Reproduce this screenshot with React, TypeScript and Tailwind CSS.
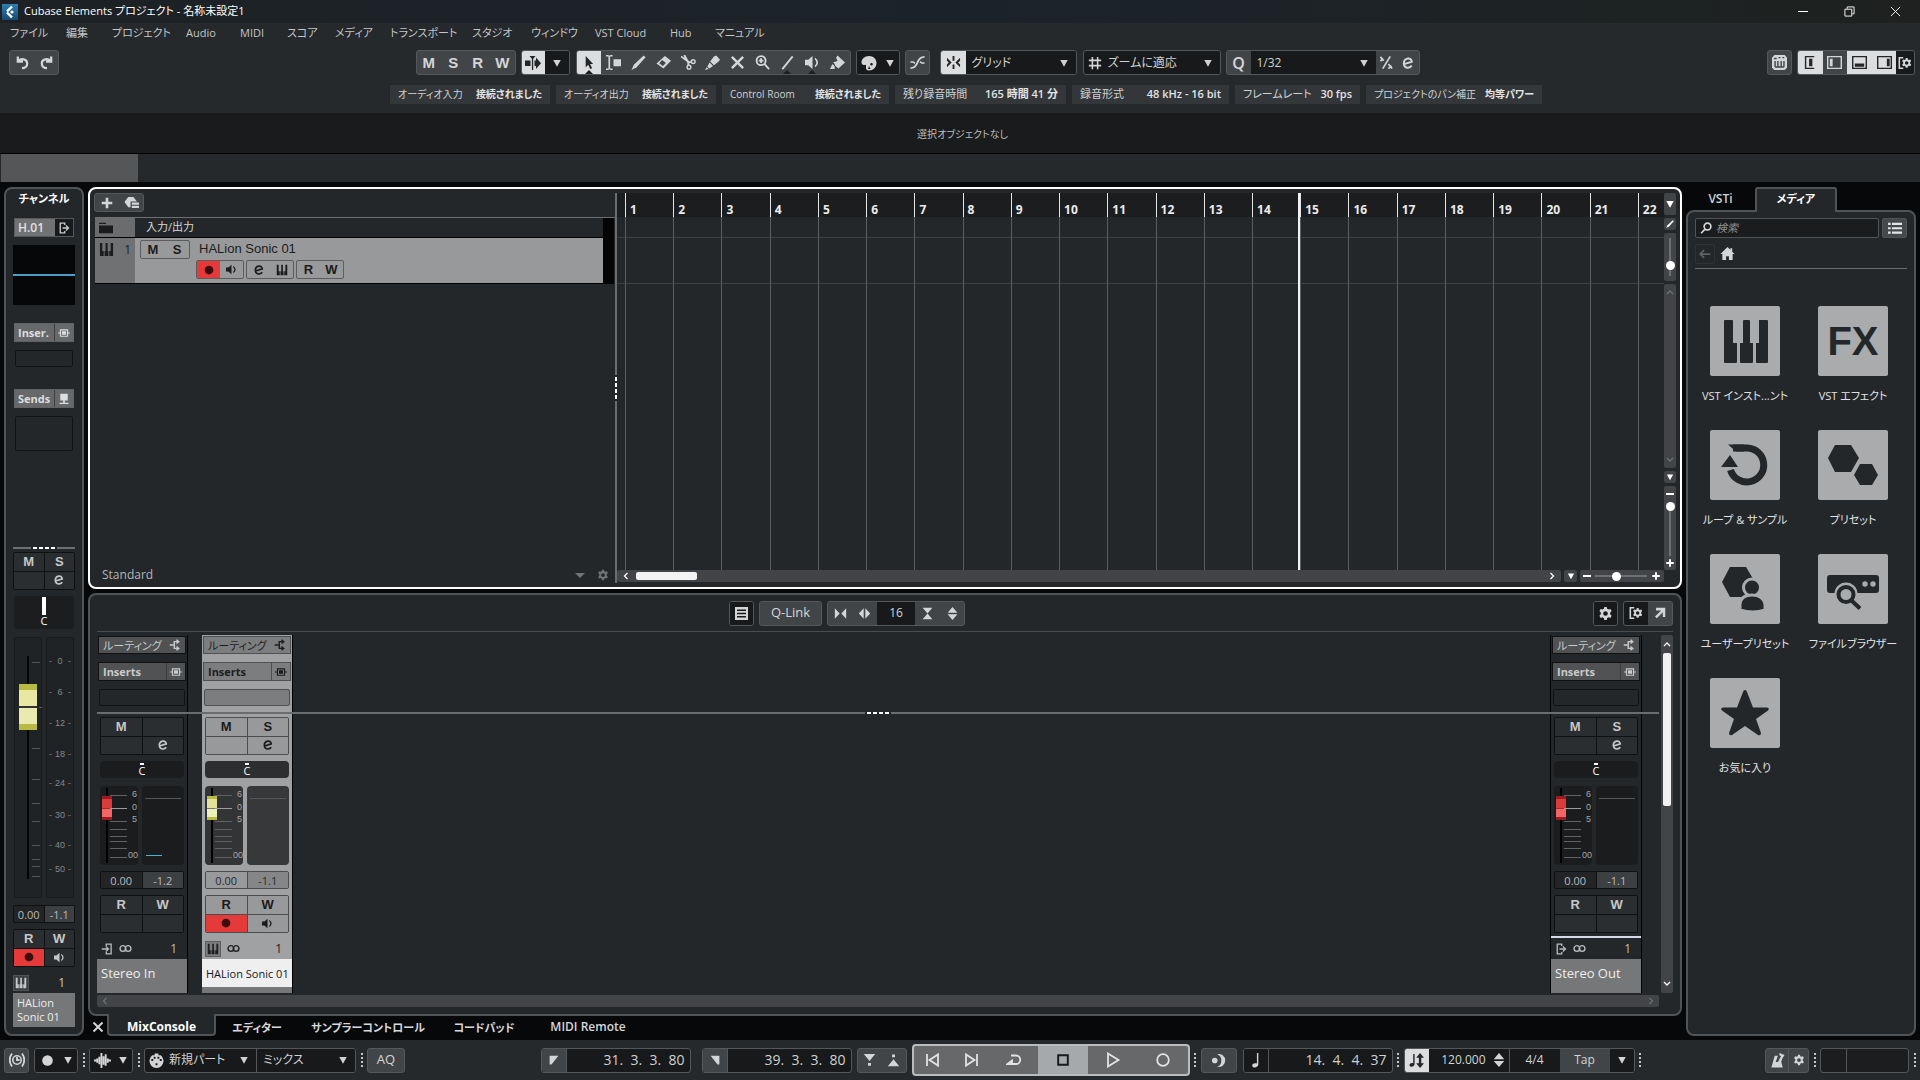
import type { ReactNode } from 'react';
import { useState } from 'react';
import clsx from 'clsx';

const jp = "font-['Open_Sans','Noto_Sans_CJK_JP',sans-serif] [font-feature-settings:'palt']";

const gearPath =
  'M6.700 1h2.600l.4 2 1.500.8 2-.7 1.300 2.200L13 6.900v2l1.500 1.600-1.300 2.300-2-.7-1.500.9-.4 2H6.700l-.4-2-1.500-.9-2 .7-1.300-2.300L3 8.900v-2L1.500 5.300l1.300-2.200 2 .7L6.300 3zM8 5.500a2.500 2.500 0 1 0 0 5 2.500 2.500 0 0 0 0-5z';

const glyphs: Record<string, ReactNode> = {
  undo: <path d="M3 1.500v5.500h5.500M3.500 6.500C6.500 3.300 13 3.800 13 9c0 3-2.200 5-5.500 5" fill="none" stroke="currentColor" strokeWidth="2.400" />,
  redo: <path d="M13 1.500v5.500H7.500M12.500 6.500C9.500 3.300 3 3.800 3 9c0 3 2.200 5 5.500 5" fill="none" stroke="currentColor" strokeWidth="2.400" />,
  autoscroll: <path d="M0 5.500h5.500v5.500H0zM9.500 5.500H11V2.500l5 5.700-5 5.800V11H9.500zM4.500 1h6L8.200 3.800V15H6.900V3.800z" />,
  arrow: <path d="M5 1v12l2.800-2.600L9.800 15l2-.9-2-4.400H13z" />,
  range: <path d="M0 0h2.200l1.300.8L4.800 0H7v1.600H4.400v12.800H7V16H4.800l-1.300-.8L2.200 16H0v-1.600h2.600V1.600H0zM8 4.500h8V12H8z" />,
  draw: <path d="M13.500 0.500l2 2L6 13l-5.500 3 2.500-5.500z" />,
  erase: <path d="M9.500 1L16 6 8 14.500 0.500 9zM6.500 5.300L3.500 8.800 7.300 11.800 10.500 8.400z" fillRule="evenodd" />,
  scissors: <><path d="M0 1.500l8.500 6M3.500 0L8 8.500M8.500 7.800l2.500-.5M7.800 8.500v2.500" fill="none" stroke="currentColor" strokeWidth="2" /><circle cx="13" cy="7" r="2" fill="none" stroke="currentColor" strokeWidth="1.500" /><circle cx="8.500" cy="13" r="2" fill="none" stroke="currentColor" strokeWidth="1.500" /></>,
  glue: <path d="M9.500 1.500l2.500-1 4 4.500-1.500 2-5 4L5.500 7zM4.800 8l3.800 3.800L4.500 14.500l-2-2zM0 16l1.800-3 2 1.800z" />,
  mute: <path d="M2 2l12 12M14 2L2 14" stroke="currentColor" strokeWidth="2.600" />,
  zoom: <><circle cx="6.500" cy="6" r="4.800" fill="none" stroke="currentColor" strokeWidth="2" /><path d="M10 9.500l5 5.500M4 6h5M6.500 3.500v5" stroke="currentColor" strokeWidth="2" /></>,
  line: <path d="M2.500 15L13.500 1.500" stroke="currentColor" strokeWidth="2" />,
  speaker: <path d="M0 5h3.500L8 1v14l-4.500-4H0zM11 3q6 5 0 10l-.8-1.200Q14 8 10.200 4.200z" />,
  colorize: <path d="M8 0.500l8 7.500-7 6.500L6 12l-2-4H2.500L8 6.500 6.500 3zM0 15l2.500-5.500L5 12v3z" />,
  palette: <path d="M8 1C3.500 1 .5 4 .5 7.500c0 2 1.500 2.700 3 2.400 1.500-.3 1.800.7 1.500 2-.4 2 .7 3.600 3 3.600 4.500 0 7.500-3.300 7.500-7.500C15.500 4 12.500 1 8 1zm2.500 9.500a1.300 1.300 0 1 1 0-2.600 1.300 1.300 0 0 1 0 2.600zM7 14l1-3 1.500 3z" fillRule="evenodd" />,
  curve: <><path d="M.5 14C4 14 6.500 12 8 8s4-6 7.500-6" fill="none" stroke="currentColor" strokeWidth="2" /><path d="M.5 7.500h3l1.800 1.500M15.500 8.500h-3L10.700 7" fill="none" stroke="currentColor" strokeWidth="1.600" /></>,
  snap: <path d="M7 1h2v5H7zM7 10h2v5H7zM1 3l5 5-5 5v-3l2-2-2-2zM15 3l-5 5 5 5v-3l-2-2 2-2z" />,
  hash: <path d="M5 1v14M11 1v14M1 5h14M1 11h14" stroke="currentColor" strokeWidth="1.800" />,
  swing: <path d="M12 1.500L4 14.500M1.500 2l3.500 4M1.500 6.500l3-2.500M10 9.500l4 5M10 14.500l3.500-3" fill="none" stroke="currentColor" strokeWidth="1.800" />,
  down: <path d="M3 4h10L8 13z" />,
  plus: <path d="M6.500 2h3v4.500H14v3H9.500V14h-3V9.500H2v-3h4.500z" />,
  preset: <path d="M4.500 2h5.500l3.800 5H7v6H4.500L.5 7.500zM8.300 8h7.700v2.300H8.300zM8.300 11.500h7.700v2.300H8.300z" />,
  folder: <path d="M0 2h8v1.500H0zM0 5h16v9H0z" />,
  keys: <path d="M1 1h2.500v8.500H5V15H1zM7 1h2.200v8.500H10V15H6V9.500h1zM12.500 1H15v14h-4V9.500h1.500z" />,
  rec: <circle cx="8" cy="8" r="5" />,
  disc: <circle cx="8" cy="8" r="6.500" />,
  out: <path d="M9 4V1.500H3v13h6V12M6 8h8M10.500 4.500L14 8l-3.500 3.500" fill="none" stroke="currentColor" strokeWidth="1.800" />,
  into: <path d="M7 4V1.500h6.500v13H7V12M1 8h8M6.500 4.500L10 8l-3.500 3.500" fill="none" stroke="currentColor" strokeWidth="1.800" />,
  insert: <path fillRule="evenodd" d="M2.500 3h11v4.200H16v1.600h-2.500V13h-11V8.800H0V7.200h2.500zM4 4.500v7h8v-7zM5.200 5.800h5.600v4.400H5.200z" />,
  send: <path d="M3 1h10v9H9v3h5v1.500H2V13h5v-3H3z" />,
  routing: <path d="M1 8h5M12 3.500H7v9h5M10 1l3 2.500L10 6M10 10l3 2.500L10 15" fill="none" stroke="currentColor" strokeWidth="1.900" />,
  stereo: <><circle cx="4.800" cy="8" r="3.500" fill="none" stroke="currentColor" strokeWidth="1.700" /><circle cx="11.200" cy="8" r="3.500" fill="none" stroke="currentColor" strokeWidth="1.700" /></>,
  gear: <path fillRule="evenodd" d={gearPath} />,
  setup: <><path d="M6 2H1.500v12H6" fill="none" stroke="currentColor" strokeWidth="1.800" /><g transform="translate(3.500 1.500) scale(.8)"><path fillRule="evenodd" d={gearPath} /></g></>,
  external: <path d="M3.500 2H14v10.500h-2.800V7L4.300 14l-2-2 7-7H3.500z" />,
  list: <path fillRule="evenodd" d="M0 0h16v16H0zM2.500 3v2h11V3zM2.500 7v2h11V7zM2.500 11v2h11v-2z" />,
  narrow: <path d="M1 1.500L7 8l-6 6.500zM15 1.500L9 8l6 6.500z" />,
  widen: <path d="M7 1.500L1 8l6 6.500zM9 1.500L15 8l-6 6.500z" />,
  squash: <path d="M2 1h12L8 8zM8 8l6 7H2z" />,
  stretch: <path d="M8 0l6 7H2zM2 9h12l-6 7z" />,
  rows: <path d="M0 2h3v2.500H0zM0 7h3v2.500H0zM0 12h3v2.500H0zM4.500 2H16v2.500H4.500zM4.500 7H16v2.500H4.500zM4.500 12H16v2.500H4.500z" />,
  search: <path d="M14.500 6a4.500 4.500 0 1 1-9 0 4.500 4.500 0 0 1 9 0zM7 9.200L1.500 15" fill="none" stroke="currentColor" strokeWidth="2.200" />,
  back: <path d="M14 8H3M7 3.500L2.500 8 7 12.500" fill="none" stroke="currentColor" strokeWidth="2" />,
  home: <path d="M8 1l3 3V2.500h2V6l2.500 2.500H13.500V15H9.500v-4h-3v4H2.500V8.500H.5z" />,
  sync: <><circle cx="8" cy="8" r="4.200" fill="none" stroke="currentColor" strokeWidth="1.600" /><path d="M8 5v3h2.500M3 1.500Q-1.500 8 3 14.500M13 1.500Q17.500 8 13 14.500" fill="none" stroke="currentColor" strokeWidth="1.800" /></>,
  wave: <path d="M0 8h2M3 6v4M5 4.500v7M7 1v14M9 4v8M11 2v11M13 6v4M14 8h2" stroke="currentColor" strokeWidth="1.800" />,
  midi: <path fillRule="evenodd" d="M6 .5h4v2h2.500A7.500 7.500 0 1 1 3.500 2.500H6zM2.500 6.500v2h2v-2zM5 4v2h2V4zM9 4v2h2V4zM11.500 6.500v2h2v-2zM7 11v2h2v-2z" />,
  locL: <path d="M1 1h14L4 15H1z" />,
  locR: <path d="M1 1h14v14h-3z" />,
  toStart: <path d="M2 2v12M13 2.500v11L4.500 8z" fill="none" stroke="currentColor" strokeWidth="1.800" />,
  toEnd: <path d="M14 2v12M3 2.500v11L11.500 8z" fill="none" stroke="currentColor" strokeWidth="1.800" />,
  cycle: <path d="M5 3.500h5a4.200 4.200 0 0 1 0 8.500H1.500L6 8.500V12" fill="none" stroke="currentColor" strokeWidth="1.800" />,
  stop: <path d="M2.500 2.500h11v11h-11z" fill="none" stroke="currentColor" strokeWidth="2.200" />,
  play: <path d="M3 1.500L13.500 8 3 14.500z" fill="none" stroke="currentColor" strokeWidth="1.800" />,
  record: <circle cx="8" cy="8" r="5.800" fill="none" stroke="currentColor" strokeWidth="1.800" />,
  punchIn: <path d="M1 0h14L8 8.500zM6.200 11h3.600v3.600H6.200z" />,
  punchOut: <path d="M8 6.500L15 15H1zM6.200 .5h3.600v3.600H6.200z" />,
  click: <path d="M6.500 1.200a7 7 0 1 1 0 13.600q4.500-1.500 4.500-6.800T6.500 1.200zM1 8a3 3 0 1 1 6 0 3 3 0 0 1-6 0z" />,
  note: <path d="M9.500 0H11v12c0 4-6.500 4.500-6.500 1.200 0-2 2.700-3 5-2z" />,
  tempo: <path d="M4.500 1H6v10.500c0 3.700-5.500 4-5.500 1.200 0-1.800 2.300-2.600 4-1.900zM11.800 0L16 5h-2.900v6H16l-4.200 5-4.200-5h2.900V5H7.600z" />,
  metronome: <path d="M5 3h3.500L6 9.500h2.500L12 3l2 1-2 5 1.500 6.500H1.500zM10 0l5.500 2-1.500 2.500-4-2z" />,
  pads: <path fillRule="evenodd" d="M2.500 0h11L16 3v10.500L13.500 16h-11L0 13.500V3zM2 3v1.500h3V3zM7 2v1.500h2V2zM11 2v1.500h2V2zM2.500 6.500V12q0 1.500 1.500 1.500h8q1.500 0 1.500-1.500V6.500H12V12h-1.500V6.500H9V12H7V6.500H5.500V12H4V6.500z" />,
  zoneL: <path d="M2 1h10v1.500H3.500v11H12V15H2zM6.500 4H10v8H6.500z" />,
  zoneChannel: <path fillRule="evenodd" d="M0 1h16v14H0zM1.500 2.500v11h13v-11zM3 4h3v8H3z" />,
  zoneB: <path fillRule="evenodd" d="M0 1h16v14H0zM1.500 2.500v11h13v-11zM3 9h10v3.500H3z" />,
  zoneR: <path fillRule="evenodd" d="M0 1h16v14H0zM1.500 2.500v11h13v-11zM10.500 4h3v8h-3z" />,
  edit: <path d="M3.500 9.300L12.300 6.500C12 3.800 10 2.500 7.800 2.800 5 3.200 3 5.800 3.200 8.800c.2 3 2.200 4.700 4.800 4.500 1.700-.1 3.200-.9 4.300-2.300" fill="none" stroke="currentColor" strokeWidth="2.300" />,
};

function Icon({ name, className = 'size-4' }: { name: string; className?: string }) {
  return (
    <svg viewBox="0 0 16 16" fill="currentColor" className={clsx('shrink-0', className)} aria-hidden="true">
      {glyphs[name]}
    </svg>
  );
}

interface ToolProps {
  icon: string;
  label: string;
  active?: boolean;
  dark?: boolean;
  notch?: boolean;
  size?: string;
  className?: string;
}

function Tool({ icon, label, active, dark, notch, size = 'size-[15px]', className = 'w-[25px]' }: ToolProps) {
  return (
    <button
      aria-label={label}
      className={clsx(
        'relative h-full flex items-center justify-center',
        active ? 'bg-[#dcddde] text-[#232629]' : dark ? 'bg-[#17191a] text-[#d4d5d6]' : 'text-[#d4d5d6]',
        className
      )}
    >
      <Icon name={icon} className={icon === 'down' ? 'size-3' : size} />
      {notch && (
        <svg viewBox="0 0 8 4" className="absolute bottom-0 left-1/2 h-1 w-2 -translate-x-1/2" fill="#1b1d1f" aria-hidden="true">
          <path d="M4 0l4 4H0z" />
        </svg>
      )}
    </button>
  );
}

function Group({ children, dark, className }: { children: ReactNode; dark?: boolean; className?: string }) {
  return (
    <div className={clsx('flex h-[25px] shrink-0 items-stretch overflow-hidden rounded-[3px] border border-[#55585a]', dark ? 'bg-[#17191a]' : 'bg-[#424548]', className)}>
      {children}
    </div>
  );
}

function Select({ label, value, className }: { label: string; value: string; className?: string }) {
  return (
    <div className={clsx('relative flex h-full items-center', className)}>
      <select aria-label={label} className="h-full w-full appearance-none bg-[#17191a] pl-[6px] text-xs text-[#d0d1d2] outline-none">
        <option>{value}</option>
      </select>
      <Icon name="down" className="pointer-events-none absolute right-[6px] size-3 text-[#d0d1d2]" />
    </div>
  );
}

function Grip() {
  return (
    <div className="flex w-[11px] shrink-0 flex-col items-center gap-[2px]">
      {[0, 1, 2, 3].map((i) => (
        <span key={i} className="size-[2px] bg-[#c4c6c7]" />
      ))}
    </div>
  );
}

/* ---------- Header ---------- */

const menus = [
  { name: 'ファイル', width: 'w-14' },
  { name: '編集', width: 'w-[46px]' },
  { name: 'プロジェクト', width: 'w-[74px]' },
  { name: 'Audio', width: 'w-[54px]' },
  { name: 'MIDI', width: 'w-[47px]' },
  { name: 'スコア', width: 'w-12' },
  { name: 'メディア', width: 'w-[55px]' },
  { name: 'トランスポート', width: 'w-[82px]' },
  { name: 'スタジオ', width: 'w-[59px]' },
  { name: 'ウィンドウ', width: 'w-16' },
  { name: 'VST Cloud', width: 'w-[75px]' },
  { name: 'Hub', width: 'w-[45px]' },
  { name: 'マニュアル', width: 'w-14' },
];

const editTools = [
  { icon: 'arrow', label: 'オブジェクトの選択', notch: true },
  { icon: 'range', label: '範囲選択' },
  { icon: 'draw', label: '鉛筆' },
  { icon: 'erase', label: '削除' },
  { icon: 'scissors', label: 'はさみ' },
  { icon: 'glue', label: 'のり' },
  { icon: 'mute', label: 'ミュート' },
  { icon: 'zoom', label: 'ズーム' },
  { icon: 'line', label: 'ライン', notch: true },
  { icon: 'speaker', label: '再生', notch: true },
  { icon: 'colorize', label: 'カラー' },
];

const infoItems = [
  { label: 'オーディオ入力', value: '接続されました', width: 'w-[160px]', small: true },
  { label: 'オーディオ出力', value: '接続されました', width: 'w-[160px]', small: true },
  { label: 'Control Room', value: '接続されました', width: 'w-[167px]', small: true },
  { label: '残り録音時間', value: '165 時間 41 分', width: 'w-[171px]' },
  { label: '録音形式', value: '48 kHz - 16 bit', width: 'w-[157px]' },
  { label: 'フレームレート', value: '30 fps', width: 'w-[125px]' },
  { label: 'プロジェクトのパン補正', value: '均等パワー', width: 'w-[176px]', small: true },
];

function TitleBar() {
  return (
    <div className="flex h-[23px] items-center bg-linear-to-r from-[#1d2124] via-[#1b232a] to-[#1e211f] pl-[2px] pr-[2px] text-white">
      <span className="flex size-4 items-center justify-center bg-linear-to-b from-[#2f7fae] to-[#164a73]">
        <svg viewBox="0 0 16 16" className="size-4" aria-hidden="true">
          <path d="M10 2.500L4.500 8l5.500 5.500" fill="none" stroke="#fff" strokeWidth="2.400" strokeDasharray="7 1.500" />
          <circle cx="10" cy="8" r="1.600" fill="#fff" />
        </svg>
      </span>
      <h1 className="ml-[6px] text-[11px]">Cubase Elements プロジェクト - 名称未設定1</h1>
      <div className="ml-auto flex">
        <button aria-label="最小化" className="flex h-[23px] w-[46px] items-center justify-center">
          <span className="h-px w-[10px] bg-white" />
        </button>
        <button aria-label="元に戻す" className="flex h-[23px] w-[46px] items-center justify-center">
          <svg viewBox="0 0 12 12" className="size-[11px]" fill="none" stroke="#fff" aria-hidden="true">
            <path d="M1 3.500h7.500V11H1zM3.500 3V1H11v7.500H9" />
          </svg>
        </button>
        <button aria-label="閉じる" className="flex h-[23px] w-[46px] items-center justify-center">
          <svg viewBox="0 0 12 12" className="size-[11px]" stroke="#fff" aria-hidden="true">
            <path d="M1 1l10 10M11 1L1 11" />
          </svg>
        </button>
      </div>
    </div>
  );
}

function Toolbar() {
  return (
    <div className="flex items-center px-[9px] pt-[7px] pr-[5px]">
      <Group className="w-[50px]">
        <Tool icon="undo" label="元に戻す" />
        <Tool icon="redo" label="やり直す" />
      </Group>
      <div className="mx-auto flex items-center pl-[9px]">
        <Group className="w-[100px] text-[15px] font-bold text-[#d4d5d6] font-['Liberation_Sans',sans-serif]">
          {['M', 'S', 'R', 'W'].map((k) => (
            <button key={k} className="w-[25px] leading-none">{k}</button>
          ))}
        </Group>
        <Group dark className="ml-[5px] w-[49px]">
          <Tool icon="autoscroll" label="自動スクロール" active size="size-4" />
          <Tool icon="down" label="自動スクロール設定" dark />
        </Group>
        <Group className="ml-[6px] w-[275px]">
          {editTools.map((t, i) => (
            <Tool key={t.icon} icon={t.icon} label={t.label} notch={t.notch} active={i === 0} />
          ))}
        </Group>
        <Group dark className="ml-[5px] w-11">
          <Tool icon="palette" label="カラーパレット" dark size="size-4" />
          <Tool icon="down" label="カラーを選択" dark className="w-[18px]" />
        </Group>
        <Group className="ml-[5px] w-[25px]">
          <Tool icon="curve" label="クロスフェード" size="size-[15px]" />
        </Group>
        <Group dark className="ml-[10px] w-[137px]">
          <Tool icon="snap" label="スナップ" active />
          <Select label="スナップタイプ" value="グリッド" className="flex-1" />
        </Group>
        <Group dark className="ml-[6px] w-[138px]">
          <span className="flex w-[18px] items-center justify-end text-[#d4d5d6]"><Icon name="hash" className="size-[14px]" /></span>
          <Select label="グリッドタイプ" value="ズームに適応" className="flex-1" />
        </Group>
        <Group className="ml-[5px] w-[194px] text-[#d4d5d6]">
          <span className="flex w-6 items-center justify-center text-base font-semibold">Q</span>
          <Select label="クオンタイズ" value="1/32" className="flex-1" />
          <Tool icon="swing" label="ソフトクオンタイズ" className="w-[22px]" />
          <Tool icon="edit" label="クオンタイズパネル" size="size-[14px]" className="w-[21px]" />
        </Group>
      </div>
      <Group>
        <Tool icon="pads" label="オンスクリーンキーボード" className="w-[23px]" />
      </Group>
      <Group className="ml-[5px] w-[118px]">
        <Tool icon="zoneL" label="左ゾーン" active />
        <Tool icon="zoneChannel" label="インスペクター" />
        <Tool icon="zoneB" label="下ゾーン" active />
        <Tool icon="zoneR" label="右ゾーン" active />
        <Tool icon="setup" label="ウィンドウ設定" dark size="size-[14px]" className="w-[18px]" />
      </Group>
    </div>
  );
}

function Header() {
  return (
    <header className="bg-[#25292c]">
      <TitleBar />
      <nav className="flex h-5 items-center pl-[10px] text-[11px] whitespace-nowrap text-[#c3c5c6]">
        {menus.map((m) => (
          <button key={m.name} className={clsx('text-left', m.width)}>{m.name}</button>
        ))}
      </nav>
      <Toolbar />
      <div className="flex justify-center gap-[6px] pt-[10px] pb-[9px] pl-3 text-[#d0d1d2]">
        {infoItems.map((item) => (
          <div key={item.label} className={clsx('flex h-[19px] items-center justify-between bg-[#34373a] px-2 whitespace-nowrap', item.small ? 'text-[10px]' : 'text-[11px]', item.width)}>
            <span>{item.label}</span>
            <span className="font-semibold text-[#e2e3e4]">{item.value}</span>
          </div>
        ))}
      </div>
      <div className="flex h-10 items-center justify-center bg-[#191b1d] pt-[2px] pl-[5px] text-[10px] text-[#b9bbbc]">選択オブジェクトなし</div>
      <div className="flex h-[29px] border-t border-black bg-[#25292c] pl-px">
        <div className="w-[137px] bg-[#555658]" />
      </div>
    </header>
  );
}

/* ---------- Channel inspector ---------- */

const channelScale = [
  { v: '0', gap: 'h-[31px]' },
  { v: '6', gap: 'h-[31px]' },
  { v: '12', gap: 'h-[31px]' },
  { v: '18', gap: 'h-[31px]' },
  { v: '24', gap: 'h-[27px]' },
  { v: '30', gap: 'h-9' },
  { v: '40', gap: 'h-6' },
  { v: '50', gap: 'h-6' },
];

function RackButton({ label, icon, light, wide }: { label: string; icon: string; light?: boolean; wide?: boolean }) {
  return (
    <div className={clsx('flex h-[19px] items-center border', light ? 'border-[#4f5051] bg-[#7c7d7e] text-[#1c1d1e]' : wide ? 'border-[#111] bg-[#505254] text-[#c9cacb]' : 'border-[#606264] bg-[#66686a] text-[#dcddde]')}>
      <button className={clsx('h-full flex-1 text-left text-[11px] leading-none font-bold whitespace-nowrap', wide ? 'pl-1' : 'pl-[3px]')}>{label}</button>
      <button aria-label={`${label} オプション`} className={clsx('flex h-full w-[19px] items-center justify-center border-l', light ? 'border-[#4f5051]' : 'border-[#3c3e40]')}>
        <Icon name={icon} className="size-3" />
      </button>
    </div>
  );
}

function Pair({ children, light }: { children: ReactNode; light?: boolean }) {
  return (
    <div
      className={clsx(
        "grid h-[38px] grid-cols-2 grid-rows-2 gap-px rounded-[2px] border text-[13px] leading-none font-bold font-['Liberation_Sans',sans-serif]",
        light
          ? 'border-[#4b4c4d] bg-[#4b4c4d] text-[#1a1b1c] [&>*]:bg-[#98999a]'
          : 'border-[#0f1011] bg-[#0f1011] text-[#c6c7c8] [&>*]:bg-[#2b2e30]'
      )}
    >
      {children}
    </div>
  );
}

function EditButton() {
  return (
    <button aria-label="チャンネル設定" className="flex items-center justify-center"><Icon name="edit" className="size-3" /></button>
  );
}

function Values({ volume, peak, light }: { volume: string; peak: string; light?: boolean }) {
  return (
    <div className={clsx('flex h-[18px] items-center rounded-[2px] border text-[11px] leading-none', light ? 'border-[#4b4c4d] text-[#2a2b2c]' : 'border-[#0f1011] text-[#b9babb]')}>
      <span className={clsx('flex h-full flex-1 items-center justify-center', light ? 'bg-[#98999a]' : 'bg-[#222426]')}>{volume}</span>
      <span className={clsx('flex h-full flex-1 items-center justify-center border-l', light ? 'border-[#4b4c4d] bg-[#858687]' : 'border-[#0f1011] bg-[#3d4043]')}>{peak}</span>
    </div>
  );
}

function RecMonitor() {
  return (
    <>
      <button aria-label="録音可能" className="flex items-center justify-center bg-[#e43a3a]! text-[#3d0c0e]"><Icon name="rec" className="size-[14px]" /></button>
      <button aria-label="モニタリング" className="flex items-center justify-center"><Icon name="speaker" className="size-[11px]" /></button>
    </>
  );
}

function ChannelPanel() {
  return (
    <aside className="flex w-20 shrink-0 flex-col rounded-lg border-2 border-[#515456] bg-[#23272a] px-[7px] pb-[7px]">
      <h2 className="flex h-5 items-center justify-center text-[11px] font-semibold whitespace-nowrap text-white">チャンネル</h2>
      <div className="mx-px mt-[9px] flex h-[19px] border border-[#56585a]">
        <button className="flex flex-1 items-center bg-[#707273] pl-[3px] text-xs leading-none font-semibold text-[#e0e1e2]">H.01</button>
        <button aria-label="出力ルーティング" className="flex w-[18px] items-center justify-center bg-[#17191a] text-[#c9cacb]"><Icon name="out" className="size-3" /></button>
      </div>
      <div className="mt-2 flex h-[60px] items-center bg-[#060708]"><div className="h-[2px] w-full bg-[#4c9cc9]" /></div>
      <div className="mx-px mt-[18px]"><RackButton label="Inser." icon="insert" /></div>
      <div className="mx-[2px] mt-2 h-[17px] rounded-[2px] border border-[#111213]" />
      <div className="mx-px mt-[22px]"><RackButton label="Sends" icon="send" /></div>
      <div className="mx-[2px] mt-2 h-[35px] rounded-[2px] border border-[#111213]" />

      <div className="mt-auto flex items-center">
        <span className="h-[2px] flex-1 bg-[#6d6f70]" />
        <Dots />
        <span className="h-[2px] flex-1 bg-[#6d6f70]" />
      </div>
      <div className="mt-[3px]">
        <Pair>
          <button>M</button>
          <button>S</button>
          <span />
          <EditButton />
        </Pair>
      </div>
      <div className="mx-px mt-[6px] flex h-[33px] flex-col items-center rounded-[3px] bg-[#1b1d1e] pt-px text-[11px] leading-none text-white">
        <span className="h-[18px] w-1 bg-white" />
        <span>C</span>
      </div>
      <div className="mx-px mt-2 flex h-[261px] gap-1">
        <div className="relative flex w-7 justify-center rounded-[3px] border border-[#181a1b] bg-[#202325] py-[18px]">
          <svg viewBox="0 0 28 261" className="pointer-events-none absolute top-0 left-0 h-[261px] w-7" stroke="#55585a" aria-hidden="true">
            <path d="M17 24.500h8M24 69.500h3M17 110.500h8M17 141.500h8M17 165.500h8M17 183.500h8M17 207.500h8M17 221.500h8M17 228.500h8M17 238.500h8" />
          </svg>
          <input
            type="range"
            aria-label="音量"
            min={0}
            max={100}
            defaultValue={84}
            className="h-full w-[18px] appearance-none bg-[linear-gradient(#050505,#050505)] bg-[length:2px_100%] bg-center bg-no-repeat [direction:rtl] [writing-mode:vertical-lr] [&::-webkit-slider-thumb]:h-[46px] [&::-webkit-slider-thumb]:w-[18px] [&::-webkit-slider-thumb]:appearance-none [&::-webkit-slider-thumb]:bg-[linear-gradient(#b9ba43_0_12%,#e9e8a2_12%_48%,#333_48%_52%,#e9eab0_52%_88%,#b9ba43_88%)]"
          />
        </div>
        <div className="flex w-7 flex-col rounded-[3px] border border-[#181a1b] bg-[#202325] pt-2 text-[9px] leading-none text-[#85888a] font-['Liberation_Sans',sans-serif]">
          {channelScale.map((s) => (
            <div key={s.v} className={clsx('flex items-center justify-between px-[2px]', s.gap)}>
              <span className="h-px w-[3px] bg-[#55585a]" />
              {s.v}
              <span className="h-px w-[3px] bg-[#55585a]" />
            </div>
          ))}
        </div>
      </div>
      <div className="mt-[7px]"><Values volume="0.00" peak="-1.1" /></div>
      <div className="mt-[6px]">
        <Pair>
          <button>R</button>
          <button>W</button>
          <RecMonitor />
        </Pair>
      </div>
      <div className="mt-[6px] flex h-5 items-center justify-between pr-[10px] text-xs text-[#c6c7c8]">
        <span className="border border-[#515456] bg-[#3c3f41] p-px"><Icon name="keys" className="size-3" /></span>
        <span>1</span>
      </div>
      <div className="flex h-[34px] flex-col justify-center bg-[#757778] pl-1 text-[11px] leading-[14px] text-[#ededee]">
        <span>HALion</span>
        <span>Sonic 01</span>
      </div>
    </aside>
  );
}

function Dots() {
  return (
    <span className="flex w-[26px] justify-center gap-[2px]">
      {[0, 1, 2, 3].map((i) => (
        <span key={i} className="h-[2px] w-1 bg-white" />
      ))}
    </span>
  );
}

/* ---------- Project window ---------- */

const bars = Array.from({ length: 22 }, (_, i) => i + 1);

const knob =
  '[&::-webkit-slider-thumb]:size-[9px] [&::-webkit-slider-thumb]:appearance-none [&::-webkit-slider-thumb]:rounded-full [&::-webkit-slider-thumb]:bg-white';
const vRange =
  'w-[9px] appearance-none bg-[linear-gradient(#6d7072,#6d7072)] bg-[length:2px_100%] bg-center bg-no-repeat [direction:rtl] [writing-mode:vertical-lr]';

function TrackList() {
  return (
    <section className="flex w-[525px] shrink-0 flex-col pl-1">
      <Group className="mt-1 h-[19px]! w-[50px]">
        <Tool icon="plus" label="トラックを追加" size="size-[14px]" />
        <Tool icon="preset" label="トラックプリセット" />
      </Group>
      <div className="mt-[5px] ml-px flex border-t border-[#6d6f70]">
        <div className="min-w-0 flex-1">
          <div className="flex h-[19px] items-center text-[11px] text-[#d6d7d8]">
            <span className="flex h-full w-10 items-center bg-[#6a6c6e] pl-1 text-[#191b1c]"><Icon name="folder" className="size-[14px]" /></span>
            <span className="pl-[11px]">入力/出力</span>
          </div>
          <div className="flex h-[47px] border-y border-black bg-[#98999a] text-[#1b1c1d]">
            <div className="flex w-10 items-start justify-between bg-[#6f7173] px-1 pt-1 text-xs">
              <Icon name="keys" className="size-[15px]" />
              <span>1</span>
            </div>
            <div className="pt-[2px] pl-[5px] font-['Liberation_Sans',sans-serif]">
              <div className="flex items-start">
                <div className="flex h-[19px] w-[50px] rounded-[2px] border border-[#5c5d5e] text-[13px] font-bold">
                  <button className="flex-1 leading-none">M</button>
                  <button className="flex-1 leading-none">S</button>
                </div>
                <span className="pl-[9px] text-[13px] leading-[18px]">HALion Sonic 01</span>
              </div>
              <div className="mt-px flex gap-[2px] pl-14 text-[13px] font-bold [&>div]:flex [&>div]:h-[19px] [&>div]:w-12 [&>div]:rounded-[2px] [&>div]:border [&>div]:border-[#5c5d5e]">
                <div>
                  <button aria-label="録音可能" className="flex flex-1 items-center justify-center bg-[#e43a3a] text-[#3d0c0e]"><Icon name="rec" className="size-[14px]" /></button>
                  <button aria-label="モニタリング" className="flex flex-1 items-center justify-center"><Icon name="speaker" className="size-[11px]" /></button>
                </div>
                <div>
                  <button aria-label="チャンネル編集" className="flex flex-1 items-center justify-center"><Icon name="edit" className="size-3" /></button>
                  <button aria-label="インストゥルメント編集" className="flex flex-1 items-center justify-center"><Icon name="keys" className="size-3" /></button>
                </div>
                <div>
                  <button className="flex-1 leading-none">R</button>
                  <button className="flex-1 leading-none">W</button>
                </div>
              </div>
            </div>
          </div>
        </div>
        <div className="w-[11px] bg-[#050505]" />
        <div className="w-px" />
      </div>
      <div className="mt-auto flex items-center pr-[6px] pb-1 pl-2 text-xs text-[#b4b6b7]">
        <span>Standard</span>
        <span className="ml-auto flex items-center gap-3 text-[#717476]">
          <svg viewBox="0 0 10 5" className="h-[5px] w-[10px]" fill="currentColor" aria-hidden="true"><path d="M0 0h10L5 5z" /></svg>
          <button aria-label="トラックコントロール設定"><Icon name="gear" className="size-3" /></button>
        </span>
      </div>
    </section>
  );
}

function Timeline() {
  return (
    <section className="relative flex min-w-0 flex-1 flex-col pt-1 pr-1 pb-[5px]">
      <div className="flex min-h-0 flex-1">
        <div className="flex min-w-0 flex-1">
          <div className="flex w-2 flex-col">
            <div className="h-6 bg-[#1b1d1f]" />
            <div className="h-[21px] border-b border-[#3d4143]" />
            <div className="h-[46px] border-b border-[#3d4143]" />
          </div>
          <div className="relative grid min-w-0 flex-1 grid-cols-[repeat(21,48fr)_26fr]">
            {bars.map((n) => (
              <div key={n} className="flex min-w-0 flex-col">
                <div className="h-6 border-l border-[#e4e5e6] bg-[#1b1d1f] pt-[10px] pl-1 text-xs leading-[14px] font-bold text-[#ececed]">{n}</div>
                <div className="h-[21px] border-b border-l border-[#3d4143] border-l-[#5c5f61]" />
                <div className="h-[46px] border-b border-l border-[#3d4143] border-l-[#5c5f61]" />
                <div className="flex-1 border-l border-[#5c5f61]" />
              </div>
            ))}
            <div className="pointer-events-none absolute inset-y-0 left-[64.8%] w-[2px] bg-[#f2f2f2]" />
          </div>
        </div>
        <div className="flex w-3 flex-col gap-[3px] text-white [&>*]:rounded-[2px] [&>*]:bg-[#424447]">
          <button aria-label="ルーラー表示" className="flex h-[22px] items-center justify-center"><Icon name="down" className="size-3" /></button>
          <button aria-label="ルーラー編集" className="flex h-3 items-center justify-center"><Icon name="draw" className="size-2" /></button>
          <div className="flex h-12 justify-center py-[5px]">
            <input type="range" aria-label="波形ズーム" defaultValue={20} className={clsx('h-full', vRange, knob)} />
          </div>
          <div className="flex flex-1 flex-col items-center justify-between py-1 text-[#6d7072]">
            <Chevron dir="up" />
            <Chevron dir="down" />
          </div>
          <button aria-label="ズームプリセット" className="flex h-3 items-center justify-center"><Icon name="down" className="size-[10px]" /></button>
          <div className="flex h-[84px] flex-col items-center justify-between py-[2px]">
            <button aria-label="縦ズームアウト" className="flex h-[11px] w-3 items-center justify-center"><span className="h-[2px] w-2 bg-white" /></button>
            <input type="range" aria-label="縦ズーム" defaultValue={98} className={clsx('h-[54px]', vRange, knob)} />
            <button aria-label="縦ズームイン"><Icon name="plus" className="size-[10px]" /></button>
          </div>
        </div>
      </div>
      <div className="flex h-3 gap-[3px] pr-3 text-white [&>*]:rounded-[2px] [&>*]:bg-[#424447]">
        <div className="flex flex-1 items-center px-[5px]">
          <Chevron dir="left" />
          <span className="ml-[6px] h-2 w-[61px] rounded-[2px] bg-[#f2f2f2]" />
          <span className="ml-auto flex"><Chevron dir="right" /></span>
        </div>
        <button aria-label="横ズームプリセット" className="flex w-[13px] items-center justify-center"><Icon name="down" className="size-[10px]" /></button>
        <div className="flex w-[84px] items-center justify-between px-[3px]">
          <button aria-label="横ズームアウト" className="flex h-3 items-center"><span className="h-[2px] w-2 bg-white" /></button>
          <input
            type="range"
            aria-label="横ズーム"
            defaultValue={39}
            className={clsx('h-[9px] w-[52px] appearance-none bg-[linear-gradient(#6d7072,#6d7072)] bg-[length:100%_2px] bg-center bg-no-repeat', knob)}
          />
          <button aria-label="横ズームイン"><Icon name="plus" className="size-[10px]" /></button>
        </div>
      </div>
    </section>
  );
}

const chevrons = { up: 'M1 6l3-3 3 3', down: 'M1 2l3 3 3-3', left: 'M5.500 1l-3 3 3 3', right: 'M2.500 1l3 3-3 3' };

function Chevron({ dir }: { dir: keyof typeof chevrons }) {
  return (
    <svg viewBox="0 0 8 8" className="size-2" fill="none" stroke="currentColor" strokeWidth="1.300" aria-hidden="true">
      <path d={chevrons[dir]} />
    </svg>
  );
}

function ProjectWindow() {
  return (
    <div className="flex min-h-[300px] flex-1 rounded-lg border-2 border-white bg-[#23272a]">
      <TrackList />
      <div className="my-1 flex w-[2px] shrink-0 items-center justify-center bg-[#6a6d6f]">
        <span className="flex shrink-0 flex-col gap-[2px] bg-[#23272a] py-[2px]">
          {[0, 1, 2, 3].map((i) => (
            <span key={i} className="h-1 w-[2px] bg-white" />
          ))}
        </span>
      </div>
      <Timeline />
    </div>
  );
}

/* ---------- MixConsole ---------- */

interface Strip {
  name: string;
  peak: string;
  kind: 'in' | 'inst' | 'out';
}

const stereoIn: Strip = { name: 'Stereo In', peak: '-1.2', kind: 'in' };
const halion: Strip = { name: 'HALion Sonic 01', peak: '-1.1', kind: 'inst' };
const stereoOut: Strip = { name: 'Stereo Out', peak: '-1.1', kind: 'out' };

function StripTop({ strip }: { strip: Strip }) {
  const light = strip.kind === 'inst';
  return (
    <div className={clsx('flex w-[91px] shrink-0 flex-col border-r border-black px-px pt-px pb-[6px]', light ? 'bg-[#a0a1a2]' : 'bg-[#23272a]')}>
      <button
        className={clsx(
          'flex h-[18px] items-center justify-between border px-1 text-[11px] leading-none whitespace-nowrap',
          light ? 'border-[#4f5051] bg-[#7c7d7e] text-[#1c1d1e]' : 'border-[#111] bg-[#505254] text-[#c9cacb]'
        )}
      >
        ルーティング
        <Icon name="routing" className="size-3" />
      </button>
      <div className="mt-2"><RackButton label="Inserts" icon="insert" light={light} wide /></div>
      <div className={clsx('mx-px mt-2 h-[17px] rounded-[2px] border', light ? 'border-[#4f5051] bg-[#7c7d7e]' : 'border-[#111213]')} />
    </div>
  );
}

function MiniFader({ light, red, meter }: { light?: boolean; red?: boolean; meter?: boolean }) {
  return (
    <div className="flex h-[79px] gap-1 text-[9px] leading-none text-[#a5a7a8] font-['Liberation_Sans',sans-serif]">
      <div className={clsx('relative flex flex-1 rounded-[4px] py-[2px] pl-[2px]', light ? 'bg-[#323436]' : 'bg-[#1a1c1d]')}>
        <svg viewBox="0 0 40 79" className="pointer-events-none absolute top-0 left-0 h-[79px] w-10" aria-hidden="true">
          <path d="M10 9.500h17M10 35.500h17M10 43.500h17M10 50.500h17M10 55.500h17M10 62.500h17M10 71.500h17" stroke="#606365" />
          <path d="M10 22.500h17" stroke="#9a9c9d" />
          <text x="32" y="11" fill="currentColor">6</text>
          <text x="32" y="24" fill="currentColor">0</text>
          <text x="32" y="36" fill="currentColor">5</text>
          <text x="28" y="72" fill="currentColor">00</text>
        </svg>
        <input
          type="range"
          aria-label="音量"
          defaultValue={85}
          className={clsx(
            'h-full w-[10px] appearance-none bg-[linear-gradient(#000,#000)] bg-[length:2px_100%] bg-center bg-no-repeat [direction:rtl] [writing-mode:vertical-lr] [&::-webkit-slider-thumb]:h-6 [&::-webkit-slider-thumb]:w-[10px] [&::-webkit-slider-thumb]:appearance-none',
            red
              ? '[&::-webkit-slider-thumb]:bg-[linear-gradient(#9b1c20_0_12%,#d93c3c_12%_50%,#a52a2c_50%_54%,#f26666_54%_88%,#9b1c20_88%)]'
              : '[&::-webkit-slider-thumb]:bg-[linear-gradient(#b9ba43_0_12%,#e2e29a_12%_50%,#777_50%_54%,#edeebd_54%_88%,#b9ba43_88%)]'
          )}
        />
      </div>
      <div className={clsx('flex flex-1 flex-col justify-between rounded-[4px] px-[3px] pt-3 pb-[9px]', light ? 'bg-[#363839]' : 'bg-[#1a1c1d]')}>
        <span className="h-px bg-[#55585a]" />
        {meter && <span className="ml-px h-px w-4 bg-[#4fb3d0]" />}
      </div>
    </div>
  );
}

function StripBottom({ strip }: { strip: Strip }) {
  const light = strip.kind === 'inst';
  return (
    <div className={clsx('flex w-[91px] shrink-0 flex-col border-r border-black', light ? 'bg-[#a0a1a2]' : 'bg-[#23272a]')}>
      <div className="px-[3px] pt-[3px]">
        <Pair light={light}>
          <button>M</button>
          {strip.kind === 'in' ? <span /> : <button>S</button>}
          <span />
          <EditButton />
        </Pair>
        <div className={clsx('mt-[6px] flex h-[17px] flex-col items-center rounded-[4px] pt-[2px] text-[11px] leading-none text-white', light ? 'bg-[#2c2e2f]' : 'bg-[#1a1c1d]')}>
          <span className="h-[2px] w-1 bg-white" />
          <span>C</span>
        </div>
        <div className="mt-2"><MiniFader light={light} red={!light} meter={strip.kind === 'in'} /></div>
        <div className="mt-[6px]"><Values volume="0.00" peak={strip.peak} light={light} /></div>
        <div className="mt-[6px]">
          <Pair light={light}>
            <button>R</button>
            <button>W</button>
            {light ? <RecMonitor /> : <><span /><span /></>}
          </Pair>
        </div>
      </div>
      <div className={clsx('mt-[3px] flex h-[23px] items-center gap-[6px] border-t-2 px-1 pr-[10px] text-xs', strip.kind === 'out' ? 'border-[#d5d9ea] text-[#b9babb]' : 'border-transparent', light ? 'text-[#1f2021]' : 'text-[#b9babb]')}>
        {light ? (
          <span className="-ml-px border border-[#5c5d5e] bg-[#7c7d7e] p-px"><Icon name="keys" className="size-3" /></span>
        ) : (
          <Icon name={strip.kind === 'in' ? 'into' : 'out'} className="size-3" />
        )}
        <Icon name="stereo" className="size-[13px]" />
        <span className="ml-auto">1</span>
      </div>
      <div className={clsx('h-[34px] px-1 whitespace-nowrap', light ? 'border-b-[6px] border-[#757778] bg-[#efeff0] pt-[7px] text-[11px] text-[#161718]' : 'bg-[#757778] pt-[5px] text-[13px] text-[#ededee]')}>
        {strip.name}
      </div>
    </div>
  );
}

function MixConsole() {
  return (
    <div className="rounded-lg border-2 border-[#515456] bg-[#23272a] px-[7px] pb-[7px]">
      <div className="flex h-[37px] items-center border-b border-[#4a4d4f]">
        <div className="w-1" />
        <div className="mx-auto flex gap-[5px] text-[#d4d5d6]">
          <Group dark>
            <Tool icon="list" label="チャンネル選択" dark size="size-[13px]" className="w-[23px]" />
          </Group>
          <Group>
            <button className="w-[61px] text-[13px]">Q-Link</button>
          </Group>
          <Group>
            <Tool icon="narrow" label="幅を縮小" size="size-[13px]" className="w-6" />
            <Tool icon="widen" label="幅を拡大" size="size-[13px]" />
            <input aria-label="チャンネル数" defaultValue="16" className="w-[38px] bg-[#17191a] text-center text-xs" />
            <Tool icon="squash" label="高さを縮小" size="size-[13px]" />
            <Tool icon="stretch" label="高さを拡大" size="size-[13px]" className="w-6" />
          </Group>
        </div>
        <div className="flex gap-[5px]">
          <Group dark><Tool icon="gear" label="機能メニュー" dark className="w-[23px]" /></Group>
          <Group>
            <Tool icon="setup" label="レイアウト設定" dark size="size-[14px]" className="w-6" />
            <Tool icon="external" label="別ウィンドウで開く" size="size-[14px]" className="w-6" />
          </Group>
        </div>
      </div>
      <div className="flex gap-[2px] pt-[3px]">
        <div className="min-w-0 flex-1">
          <div className="flex pr-[17px]">
            <StripTop strip={stereoIn} />
            <div className="w-[14px]" />
            <StripTop strip={halion} />
            <div className="ml-auto border-l border-black"><StripTop strip={stereoOut} /></div>
          </div>
          <div className="flex items-center">
            <span className="h-[2px] flex-1 bg-[#6a6d6f]" />
            <Dots />
            <span className="h-[2px] flex-1 bg-[#6a6d6f]" />
          </div>
          <div className="flex pr-[17px]">
            <StripBottom strip={stereoIn} />
            <div className="w-[14px]" />
            <StripBottom strip={halion} />
            <div className="ml-auto border-l border-black"><StripBottom strip={stereoOut} /></div>
          </div>
        </div>
        <div className="flex w-3 flex-col items-center rounded-[2px] bg-[#424447] py-[5px] text-white">
          <Chevron dir="up" />
          <span className="mt-[5px] h-[153px] w-2 rounded-[2px] bg-[#f2f2f2]" />
          <span className="mt-auto"><Chevron dir="down" /></span>
        </div>
      </div>
      <div className="mt-[2px] mr-[14px] flex h-3 items-center justify-between rounded-[2px] bg-[#424447] px-1 text-[#6d7072]">
        <Chevron dir="left" />
        <Chevron dir="right" />
      </div>
    </div>
  );
}

const lowerTabs = [
  { name: 'エディター', width: 'w-[82px] text-[11px]' },
  { name: 'サンプラーコントロール', width: 'w-[140px] text-[11px]' },
  { name: 'コードパッド', width: 'w-[92px] text-[11px]' },
  { name: 'MIDI Remote', width: 'w-[116px]' },
];

function LowerTabs() {
  return (
    <div className="flex h-5 text-xs leading-none font-semibold whitespace-nowrap text-[#d6d7d8]" role="tablist">
      <button aria-label="下ゾーンを閉じる" className="flex w-[19px] items-center justify-center pt-[2px]"><Icon name="mute" className="size-3" /></button>
      <button role="tab" aria-selected="true" className="relative -mt-[2px] h-[22px] w-[109px] rounded-b border-2 border-t-0 border-[#515456] bg-[#23272a] pt-[6px] font-bold text-white">MixConsole</button>
      {lowerTabs.map((t) => (
        <button key={t.name} role="tab" className={clsx('pt-[2px]', t.width)}>{t.name}</button>
      ))}
    </div>
  );
}

/* ---------- Right zone ---------- */

const tiles: { name: string; art: ReactNode }[] = [
  { name: 'VST インスト...ント', art: <path d="M14 15q0-1 1-1h7q1 0 1 1v22h4v19q0 1-1 1H15q-1 0-1-1zM33 15q0-1 1-1h5q1 0 1 1v22h3v19q0 1-1 1H31q-1 0-1-1V37h3zM49 14h8q1 0 1 1v41q0 1-1 1H47q-1 0-1-1V37h3z" /> },
  { name: 'VST エフェクト', art: null },
  { name: 'ループ & サンプル', art: <><path d="M23 18h14a17 17 0 1 1-16.500 22" fill="none" stroke="currentColor" strokeWidth="7" /><path d="M18 14.500h16v7H26zM11 37l9-12 8 12z" /></> },
  { name: 'プリセット', art: <path d="M17 15h16l8 13-8 14H17l-7-14zM42 34h12l6 11-6 10H42l-6-10z" /> },
  { name: 'ユーザープリセット', art: <><path d="M20 13h16l9 15-9 15H20l-8-15z" /><g stroke="#a9abad" strokeWidth="3"><circle cx="42" cy="33.500" r="8.500" /><path d="M30 56v-6q1-9 12-9t13 9v6q-12 4-25 0z" /></g></> },
  { name: 'ファイルブラウザー', art: <><path d="M12 21h46q3 0 3 3v12q0 3-3 3H12q-3 0-3-3V24q0-3 3-3z" /><circle cx="47" cy="30" r="2.700" fill="#a9abad" /><circle cx="55" cy="30" r="2.700" fill="#a9abad" /><circle cx="28" cy="40" r="11.500" fill="#a9abad" /><circle cx="28" cy="40.500" r="7.500" fill="#a9abad" stroke="currentColor" strokeWidth="4" /><path d="M33 46l9 8.500" stroke="currentColor" strokeWidth="4" /></> },
  { name: 'お気に入り', art: <path d="M35 12q1.500 0 2 2l6 15.500h14q3 .5 1 3L46 41l5 14q0 3-3 2L35 48 22 57q-3 1-3-2l5-14-12-8.500q-2-2.500 1-3h14L33 14q.5-2 2-2z" /> },
];

function RightZone() {
  const [query, setQuery] = useState('');

  return (
    <aside className="flex w-[230px] shrink-0 flex-col">
      <div className="flex h-[25px] items-start text-xs leading-none font-semibold text-[#d0d1d2]" role="tablist">
        <button role="tab" className="h-[23px] w-[69px]">VSTi</button>
        <button role="tab" aria-selected="true" className="relative z-10 h-[25px] w-[82px] rounded-t-[3px] border-2 border-b-0 border-[#515456] bg-[#23272a] pb-1 text-[11px] text-white">メディア</button>
      </div>
      <div className="-mt-[2px] flex-1 rounded-lg border-2 border-[#515456] bg-[#23272a] px-[7px] pt-[6px]">
        <div className="flex gap-[3px]">
          <label className="flex h-5 min-w-0 flex-1 items-center rounded-[2px] border border-[#515456] bg-[#1a1c1e] px-1 text-[#d4d5d6]">
            <Icon name="search" className="size-3" />
            <input
              type="text"
              aria-label="検索"
              value={query}
              onChange={(e) => setQuery(e.target.value)}
              placeholder="検索"
              className="min-w-0 flex-1 bg-transparent pl-1 text-[11px] italic outline-none placeholder:text-[#8b8e90]"
            />
          </label>
          <button aria-label="結果リスト" className="flex h-5 w-[25px] items-center justify-center rounded-[2px] border border-[#515456] bg-[#46494c] text-[#e2e3e4]"><Icon name="rows" className="size-[14px]" /></button>
        </div>
        <div className="mt-[5px] flex h-[26px] items-center gap-[5px] border-b border-[#6a6d6f] pb-1">
          <button aria-label="戻る" className="flex h-5 w-5 items-center justify-center rounded-[2px] border border-[#303335] text-[#5f6264]"><Icon name="back" className="size-[14px]" /></button>
          <button aria-label="ホーム" className="text-[#d4d5d6]"><Icon name="home" className="size-[15px]" /></button>
        </div>
        <div className="mt-[37px] -ml-1 grid grid-cols-2 gap-y-[26px]">
          {tiles.map((t) => (
            <button key={t.name} className="flex flex-col items-center text-[11px] whitespace-nowrap text-[#e2e3e4]">
              <span className="flex size-[70px] items-center justify-center rounded-[2px] bg-[#a9abad] text-[#23272a]">
                {t.art ? (
                  <svg viewBox="0 0 70 70" className="size-[70px]" fill="currentColor" aria-hidden="true">{t.art}</svg>
                ) : (
                  <span className="text-[40px] leading-none font-bold font-['Liberation_Sans',sans-serif]">FX</span>
                )}
              </span>
              <span className="mt-3 leading-4">{t.name}</span>
            </button>
          ))}
        </div>
      </div>
    </aside>
  );
}

/* ---------- Transport ---------- */

function Position({ icon, label, value }: { icon: string; label: string; value: string }) {
  return (
    <Group dark>
      <button aria-label={label} className={clsx('flex w-[25px] items-center justify-center border-r border-[#55585a] text-[#d4d5d6]', icon === 'note' ? 'bg-[#17191a]' : 'bg-[#424548]')}>
        <Icon name={icon} className={icon === 'note' ? 'size-[15px]' : 'size-[10px]'} />
      </button>
      <input aria-label={`${label} 位置`} defaultValue={value} className="w-[123px] bg-transparent pr-[5px] text-right text-sm text-[#d0d1d2]" />
    </Group>
  );
}

function Transport() {
  return (
    <footer className="flex h-10 shrink-0 items-center bg-[#25292c] pl-1 text-xs text-[#d4d5d6]">
      <Group><Tool icon="sync" label="遅延補償" size="size-4" className="w-[23px]" /></Group>
      <Group dark className="ml-[5px]">
        <Tool icon="disc" label="録音モード" dark size="size-[13px]" className="w-6" />
        <Tool icon="down" label="録音モード設定" dark className="w-[18px]" />
      </Group>
      <Grip />
      <Group dark>
        <Tool icon="wave" label="オーディオ録音" dark size="size-[17px]" className="w-6" />
        <Tool icon="down" label="オーディオ録音設定" dark className="w-[18px]" />
      </Group>
      <Grip />
      <Group dark>
        <span className="flex w-[22px] items-center justify-center"><Icon name="midi" className="size-[15px]" /></span>
        <Select label="MIDI 録音モード" value="新規パート" className="w-[90px] border-r border-[#55585a] [&>select]:pl-[2px]" />
        <Select label="サイクル録音モード" value="ミックス" className="w-[98px]" />
      </Group>
      <Grip />
      <Group><button className="w-[36px] text-[13px]">AQ</button></Group>

      <div className="mx-auto flex items-center pl-4">
        <div className="mr-[11px]"><Position icon="locL" label="左ロケーター" value="31.  3.  3.  80" /></div>
        <Position icon="locR" label="右ロケーター" value="39.  3.  3.  80" />
        <Group className="ml-[5px]">
          <Tool icon="punchIn" label="パンチイン" size="size-[13px]" className="w-6" />
          <Tool icon="punchOut" label="パンチアウト" size="size-[13px]" className="w-6" />
        </Group>
        <div className="ml-[5px] flex h-8 overflow-hidden rounded border-2 border-[#b9bbbc] bg-[#66686a] text-[#e2e3e4] [&>button]:flex [&>button]:items-center [&>button]:justify-center">
          <button aria-label="先頭へ" className="w-[38px]"><Icon name="toStart" /></button>
          <button aria-label="末尾へ" className="w-[38px]"><Icon name="toEnd" /></button>
          <button aria-label="サイクル" className="w-[48px]"><Icon name="cycle" /></button>
          <button aria-label="停止" className="w-[50px] bg-[#a6a9ab] text-[#17191a]"><Icon name="stop" className="size-[14px]" /></button>
          <button aria-label="再生" className="w-[50px]"><Icon name="play" /></button>
          <button aria-label="録音" className="w-[50px]"><Icon name="record" /></button>
        </div>
        <Grip />
        <Group><Tool icon="click" label="クリック" className="w-[34px]" /></Group>
        <div className="ml-[6px]"><Position icon="note" label="現在位置" value="14.  4.  4.  37" /></div>
        <Grip />
        <Group dark>
          <Tool icon="tempo" label="テンポトラック" active className="w-6" />
          <input aria-label="テンポ" defaultValue="120.000" className="w-[60px] bg-transparent pr-[3px] text-right text-xs" />
          <span className="flex w-[21px] items-center justify-center border-r border-[#55585a]"><Icon name="stretch" className="size-[14px]" /></span>
          <button className="w-[50px]">4/4</button>
          <button className="w-[50px] bg-[#424548]">Tap</button>
          <Tool icon="down" label="テンポ設定" dark className="w-6" />
        </Group>
        <Grip />
      </div>

      <Group>
        <Tool icon="metronome" label="メトロノーム" className="w-[23px] border-r border-[#55585a]" />
        <Tool icon="gear" label="メトロノーム設定" size="size-3" className="w-[19px]" />
      </Group>
      <Grip />
      <div className="flex h-[25px] w-[89px] rounded-[3px] border border-[#55585a] bg-[#1b1d1f]">
        <span className="w-[26px] border-r border-[#55585a]" />
      </div>
      <Grip />
    </footer>
  );
}

export default function App() {
  return (
    <div className={clsx('flex min-h-screen flex-col bg-[#070809]', jp)}>
      <Header />
      <main className="flex flex-1 gap-1 px-1 pt-[5px] pb-1">
        <ChannelPanel />
        <div className="flex min-w-0 flex-1 flex-col">
          <ProjectWindow />
          <div className="mt-1">
            <MixConsole />
            <LowerTabs />
          </div>
        </div>
        <RightZone />
      </main>
      <Transport />
    </div>
  );
}
